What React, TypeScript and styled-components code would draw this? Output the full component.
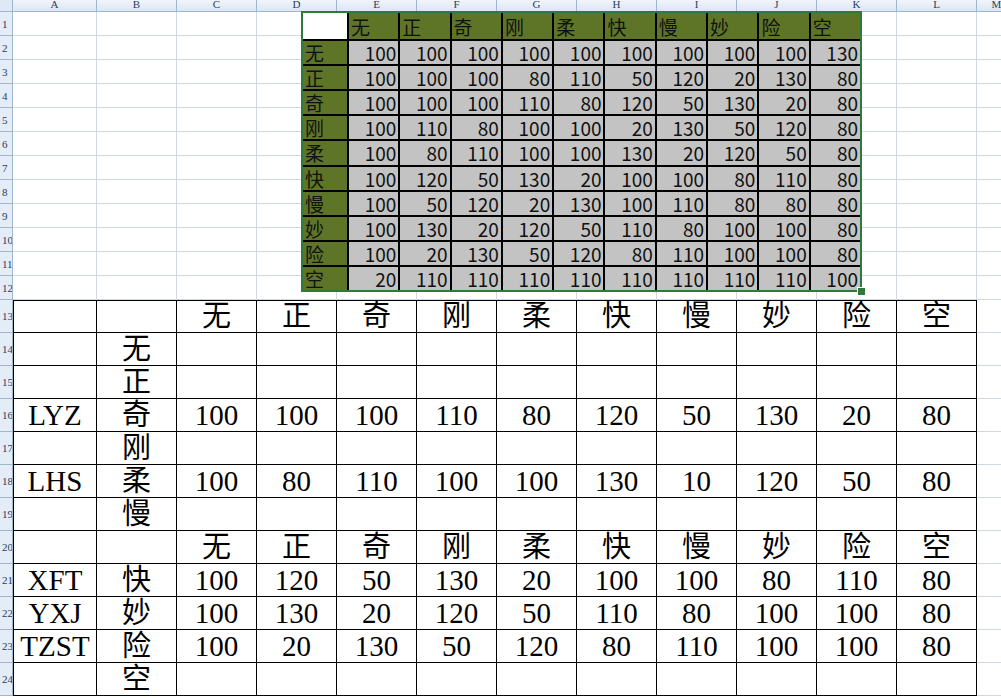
import React from "react";
import styled, { createGlobalStyle } from "styled-components";

const G = createGlobalStyle`
  html, body { margin: 0; padding: 0; background: #fff; overflow: hidden; }
  body { font-family: "Liberation Serif", "Noto Sans CJK SC", serif; }
`;

const COLS = ["A","B","C","D","E","F","G","H","I","J","K","L","M"];
const W = [84,80,80,80,80,80,80,80,80,80,80,80,40];
const tmpl = `13px ${W.map(w=>w+"px").join(" ")}`;

const Sheet = styled.div`
  position: relative; width: 1001px; height: 698px; overflow: hidden;
  display: grid; grid-template-columns: ${tmpl};
  grid-template-rows: 12px repeat(12, 24px) repeat(12, 33px);
`;
const Corner = styled.div`background:#dfe8f5;border-right:1px solid #9eb6ce;border-bottom:1px solid #9eb6ce;`;
const ColHead = styled.div`
  background: linear-gradient(#f1f5fb,#dce6f4); border-right:1px solid #9eb6ce; border-bottom:1px solid #9eb6ce;
  font: 11px "Liberation Serif", serif; color:#27415f; text-align:center; line-height:8px; overflow:hidden;
`;
const RowHead = styled.div`
  background:#e4ecf7; border-right:1px solid #9eb6ce; border-bottom:1px solid #9eb6ce;
  font: 11px "Liberation Serif", serif; color:#27415f; overflow:hidden; white-space:nowrap;
  display:flex; align-items:center; justify-content:flex-start; padding-left:2px;
`;
const Cell = styled.div<{ $t?: boolean; $l?: boolean; $b?: boolean }>`
  border-right: 1px solid ${p=>p.$t?"#000":"#d0d7e5"};
  border-bottom: 1px solid ${p=>p.$t?"#000":"#d0d7e5"};
  ${p=>p.$l?"border-left:1px solid #000;":""}
  ${p=>p.$b?"border-top:1px solid #000;":""}
  font-size: 29px; line-height: 31px; color:#000;
  display:flex; align-items:flex-end; justify-content:center; overflow:visible; white-space:nowrap;
  font-family: "Liberation Serif", "Noto Sans CJK SC", serif;
`;

const Pic = styled.div`
  position:absolute; left:301px; top:11px; width:561px; height:281px;
  border:2px solid #2f7a3a; background:#000; box-sizing:border-box;
  display:grid; grid-template-columns:44px repeat(10, 1fr); grid-template-rows:26px repeat(10,1fr); gap:2px;
`;
const PCell = styled.div<{ $k: "w"|"g"|"d" }>`
  background:${p=>p.$k==="w"?"#fff":p.$k==="g"?"#5e7528":"#c3c3c3"};
  font: 19px "Noto Sans CJK SC", "DejaVu Sans", sans-serif; color:#111;
  display:flex; align-items:center; justify-content:${p=>p.$k==="d"?"flex-end":"flex-start"};
  padding: 0 2px; line-height:1; overflow:hidden;
`;
const Handle = styled.div`position:absolute;left:857px;top:287px;width:7px;height:7px;background:#2f7a3a;border:1px solid #fff;`;

const H = ["无","正","奇","刚","柔","快","慢","妙","险","空"];
const PD = [
  [100,100,100,100,100,100,100,100,100,130],
  [100,100,100,80,110,50,120,20,130,80],
  [100,100,100,110,80,120,50,130,20,80],
  [100,110,80,100,100,20,130,50,120,80],
  [100,80,110,100,100,130,20,120,50,80],
  [100,120,50,130,20,100,100,80,110,80],
  [100,50,120,20,130,100,110,80,80,80],
  [100,130,20,120,50,110,80,100,100,80],
  [100,20,130,50,120,80,110,100,100,80],
  [20,110,110,110,110,110,110,110,110,100],
];

const E = Array(10).fill("");
const BIG: (string|number)[][] = [
  ["","",...H],
  ["","无",...E],
  ["","正",...E],
  ["LYZ","奇",100,100,100,110,80,120,50,130,20,80],
  ["","刚",...E],
  ["LHS","柔",100,80,110,100,100,130,10,120,50,80],
  ["","慢",...E],
  ["","",...H],
  ["XFT","快",100,120,50,130,20,100,100,80,110,80],
  ["YXJ","妙",100,130,20,120,50,110,80,100,100,80],
  ["TZST","险",100,20,130,50,120,80,110,100,100,80],
  ["","空",...E],
];

export default function App() {
  const cells: React.ReactNode[] = [];
  cells.push(<Corner key="c" />);
  COLS.forEach(c => cells.push(<ColHead key={"h"+c}>{c}</ColHead>));
  for (let r = 1; r <= 24; r++) {
    cells.push(<RowHead key={"r"+r}>{r}</RowHead>);
    for (let c = 0; c < 13; c++) {
      const inT = r >= 13 && c < 12;
      const v = inT ? BIG[r-13][c] : "";
      cells.push(<Cell key={r+"-"+c} $t={inT} $l={inT && c===0} $b={r===13 && c<12}>{v}</Cell>);
    }
  }
  return (
    <>
      <G />
      <Sheet>
        {cells}
        <Pic>
          <PCell $k="w" />
          {H.map(h => <PCell key={"ph"+h} $k="g">{h}</PCell>)}
          {PD.map((row, i) => (
            <React.Fragment key={i}>
              <PCell $k="g">{H[i]}</PCell>
              {row.map((v, j) => <PCell key={j} $k="d">{v}</PCell>)}
            </React.Fragment>
          ))}
        </Pic>
        <Handle />
      </Sheet>
    </>
  );
}
